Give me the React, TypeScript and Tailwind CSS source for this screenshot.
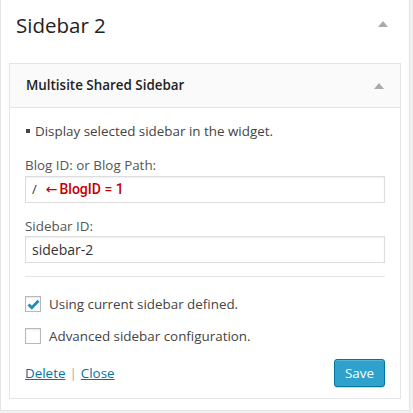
import React from "react";

const font = { fontFamily: '"Open Sans", "Noto Sans", sans-serif' };

function Caret() {
  return (
    <svg width="10" height="6" viewBox="0 0 10 6" className="block">
      <path d="M5 0 L10 6 L0 6 Z" fill="#aaaaaa" />
    </svg>
  );
}

function Check({ checked, label }: { checked?: boolean; label: string }) {
  return (
    <label className="flex items-center gap-[8px] h-[16px]">
      <span className="w-[16px] h-[16px] border border-[#b4b9be] bg-white shadow-[inset_0_1px_2px_rgba(0,0,0,0.1)] flex items-center justify-center">
        {checked && (
          <svg width="13" height="11" viewBox="0 0 13 11">
            <path d="M1.5 5.5 L4.8 8.8 L11.5 1.8" stroke="#1e8cbe" strokeWidth="2.8" fill="none" />
          </svg>
        )}
      </span>
      <span className="text-[13.4px] text-[#444]">{label}</span>
    </label>
  );
}

export default function App() {
  return (
    <div className="w-[413px] h-[413px] bg-[#f1f1f1] overflow-hidden" style={font}>
      <div className="w-[410px] h-[411px] bg-white border-l border-r border-b border-[#e5e5e5]">
        <div className="h-[63px] flex items-start justify-between pl-[15px] pr-[21px] pt-[10px]">
          <div className="text-[20.5px] leading-[30px] text-[#222]">Sidebar 2</div>
          <div className="pt-[11px]"><Caret /></div>
        </div>

        <div className="mx-[8px] h-[336px] border border-[#e5e5e5] bg-white">
          <div className="h-[44px] bg-[#fafafa] border-b border-[#e5e5e5] flex items-center justify-between pl-[16px] pr-[16px]">
            <div className="text-[13.4px] font-semibold text-[#222]">Multisite Shared Sidebar</div>
            <Caret />
          </div>

          <div className="px-[15px] text-[#444] text-[13.4px]">
            <p className="mt-[13px] leading-[20px]">
              <span className="inline-block w-[4px] h-[4px] bg-[#444] align-[3px] ml-[1px] mr-[5px]" />Display selected sidebar in the widget.
            </p>

            <div className="mt-[14px] leading-[20px] text-[#555]">Blog ID: or Blog Path:</div>
            <div className="mt-[1px] h-[27px] border border-[#dddddd] shadow-[inset_0_1px_2px_rgba(0,0,0,0.07)] flex items-center px-[6px] text-[#333]">
              <span className="text-[13px]">/</span>
              <span
                className="ml-[9px] flex items-center text-[14px] font-medium text-[#c40000]"
                style={{ fontFamily: '"Roboto", "Liberation Sans", sans-serif' }}
              >
                <span className="text-[14px] mr-[2px]" style={{ fontFamily: '"DejaVu Sans", sans-serif' }}>←</span>
                BlogID = 1
              </span>
            </div>

            <div className="mt-[13px] leading-[20px] text-[#555]">Sidebar ID:</div>
            <div className="h-[27px] border border-[#dddddd] shadow-[inset_0_1px_2px_rgba(0,0,0,0.07)] flex items-center px-[6px] text-[14px] text-[#333]">
              sidebar-2
            </div>

            <div className="mt-[13px] border-t border-[#e5e5e5]" />

            <div className="mt-[19px]">
              <Check checked label="Using current sidebar defined." />
            </div>
            <div className="mt-[16px]">
              <Check label="Advanced sidebar configuration." />
            </div>

            <div className="mt-[15px] flex items-start justify-between">
              <div className="pt-[4px] text-[13.4px] text-[#aaa]">
                <a className="text-[#0073aa] underline">Delete</a>
                <span className="mx-[4px]">|</span>
                <a className="text-[#0073aa] underline">Close</a>
              </div>
              <button className="h-[28px] w-[51px] rounded-[3px] bg-[#2ea2cc] border border-[#0074a2] shadow-[inset_0_1px_0_rgba(120,200,230,0.5),0_1px_0_rgba(0,0,0,0.15)] text-white text-[13.4px]">
                Save
              </button>
            </div>
          </div>
        </div>
      </div>
    </div>
  );
}
